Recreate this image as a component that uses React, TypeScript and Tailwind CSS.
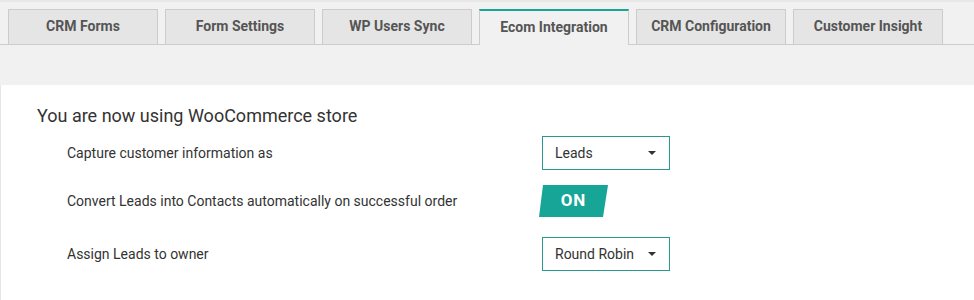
import React from "react";

const tabs = [
  "CRM Forms",
  "Form Settings",
  "WP Users Sync",
  "Ecom Integration",
  "CRM Configuration",
  "Customer Insight",
];

function Select({ value }: { value: string }) {
  return (
    <div className="flex h-[34px] w-[128px] items-center justify-between border border-[#27998f] bg-white pl-[12px] pr-[13px] text-[14px] text-[#333]">
      <span>{value}</span>
      <svg width="8" height="4" viewBox="0 0 8 4">
        <path d="M0 0 L8 0 L4 4 Z" fill="#333" />
      </svg>
    </div>
  );
}

export default function App() {
  return (
    <div
      className="h-[300px] w-[974px] overflow-hidden bg-[#f1f1f1]"
      style={{ fontFamily: "Roboto, 'Liberation Sans', sans-serif" }}
    >
      <div className="h-[85px] border-t-2 border-[#e7e7e7]">
        <div className="mt-[7px] flex gap-[7px] border-b border-[#cccccc] pl-[8px]">
          {tabs.map((t, i) =>
            i === 3 ? (
              <div
                key={t}
                className="-mb-px flex h-[36px] w-[150px] items-center justify-center border-x border-t-2 border-x-[#cccccc] border-t-[#17a597] bg-[#f1f1f1] pb-[1px] text-[14px] font-bold text-[#555]"
              >
                {t}
              </div>
            ) : (
              <div
                key={t}
                className="flex h-[35px] w-[150px] items-center justify-center border-x border-t border-[#cccccc] bg-[#e5e5e5] pb-[2px] text-[14px] font-bold text-[#555]"
              >
                {t}
              </div>
            )
          )}
        </div>
      </div>
      <div className="h-[215px] border-l border-[#e6e6e6] bg-white pl-[36px] pt-[20px]">
        <div className="h-[22px] text-[18px] leading-[22px] text-[#333]">
          You are now using WooCommerce store
        </div>
        <div className="ml-[30px] mt-[9px] flex items-center">
          <div className="w-[475px] text-[14px] text-[#333]">Capture customer information as</div>
          <Select value="Leads" />
        </div>
        <div className="ml-[30px] mt-[15px] flex items-center">
          <div className="w-[475px] text-[14px] text-[#333]">
            Convert Leads into Contacts automatically on successful order
          </div>
          <div
            className="-ml-[3px] flex h-[32px] w-[69px] items-center justify-center bg-[#17a597] text-[17px] font-bold tracking-[1px] text-white"
            style={{ clipPath: "polygon(4px 0, 100% 0, calc(100% - 5px) 100%, 0 100%)" }}
          >
            ON
          </div>
        </div>
        <div className="ml-[30px] mt-[20px] flex items-center">
          <div className="w-[475px] text-[14px] text-[#333]">Assign Leads to owner</div>
          <Select value="Round Robin" />
        </div>
      </div>
    </div>
  );
}
